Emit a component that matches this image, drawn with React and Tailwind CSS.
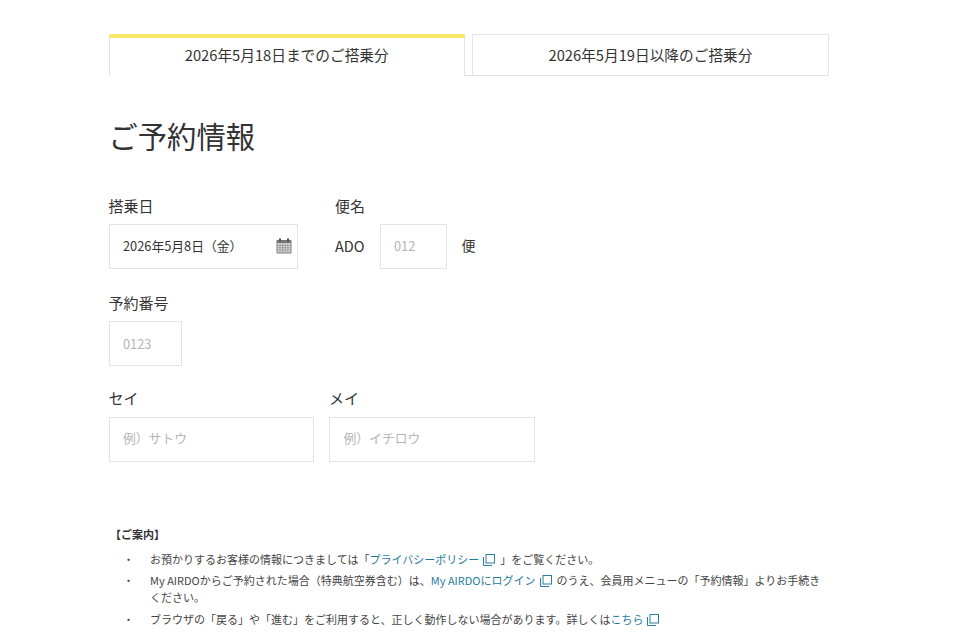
import React from 'react';

const labelClass = 'text-[15px] leading-[22px] text-[#333]';
const inputClass =
  'h-[44.5px] border border-[#e4e4e4] bg-white px-[13.5px] text-[12.8px] text-[#333] placeholder:text-[#b5b5b5] outline-none';

const CalendarIcon = () => (
  <svg width="16" height="16" viewBox="0 0 16 16" className="absolute right-[6.5px] top-[14px]">
    <rect x="0.5" y="2" width="15" height="13.5" rx="1" fill="#777" />
    <rect x="3" y="0.5" width="2" height="3" fill="#555" />
    <rect x="11" y="0.5" width="2" height="3" fill="#555" />
    <rect x="1.5" y="5" width="13" height="9.5" fill="#dedede" />
    <path d="M1.5 7.4h13M1.5 9.8h13M1.5 12.2h13M4 5v9.5M6.6 5v9.5M9.2 5v9.5M11.8 5v9.5" stroke="#8a8a8a" strokeWidth="0.7" />
  </svg>
);

const ExternalIcon = () => (
  <svg width="12" height="12" viewBox="0 0 12 12" fill="none" className="ml-[4px] mr-[5px] inline-block align-[-2px]">
    <rect x="3" y="0.5" width="8.5" height="8.5" stroke="#2b7f9e" strokeWidth="1" />
    <path d="M0.5 3v8.5H9" stroke="#2b7f9e" strokeWidth="1" />
  </svg>
);

const Link = ({ children }) => <span className="text-[#1f7a9c]">{children}</span>;

const Notice = ({ children, className = '' }) => (
  <li className={`flex ${className}`}>
    <span className="w-[41.5px] shrink-0 pl-[14.5px]">・</span>
    <p className="w-[680px]">{children}</p>
  </li>
);

export default function App() {
  return (
    <div
      className="h-[640px] overflow-hidden bg-white pl-[108.5px] pt-[34px] text-[#333]"
      style={{ fontFamily: '"Noto Sans CJK JP", "Noto Sans", sans-serif' }}
    >
      <div className="flex h-[42px] w-[720.5px] items-stretch border-b border-[#e4e4e4]">
        <div className="-mb-px flex w-[356.5px] items-center justify-center border-x border-[#e4e4e4] border-t-[4px] border-t-[#f8ea66] bg-white pb-[3px] text-[14.7px]">
          2026年5月18日までのご搭乗分
        </div>
        <div className="w-[7px]" />
        <div className="flex w-[357px] items-center justify-center border border-b-0 border-[#e4e4e4] text-[14.7px]">
          2026年5月19日以降のご搭乗分
        </div>
      </div>

      <h1 className="mt-[37px] text-[29.3px] font-normal leading-[44px] text-[#333]">ご予約情報</h1>

      <div className="mt-[38px] flex gap-[37px]">
        <div className="flex flex-col gap-[7px]">
          <label className={labelClass}>搭乗日</label>
          <div className="relative">
            <div className={`${inputClass} flex w-[189.5px] items-center pb-px`}>2026年5月8日（金）</div>
            <CalendarIcon />
          </div>
        </div>
        <div className="flex flex-col gap-[7px]">
          <label className={labelClass}>便名</label>
          <div className="flex items-center">
            <span className="w-[44.5px] pb-px text-[14.5px]">ADO</span>
            <input className={`${inputClass} w-[67.5px] pb-[2px]`} placeholder="012" />
            <span className="ml-[14.5px] pb-px text-[14px]">便</span>
          </div>
        </div>
      </div>

      <div className="mt-[23.5px] flex flex-col gap-[7px]">
        <label className={labelClass}>予約番号</label>
        <input className={`${inputClass} w-[73.5px]`} placeholder="0123" />
      </div>

      <div className="mt-[21.5px] flex gap-[15px]">
        <div className="flex flex-col gap-[8px]">
          <label className={labelClass}>セイ</label>
          <input className={`${inputClass} w-[205.5px] pb-[3px]`} placeholder="例）サトウ" />
        </div>
        <div className="flex flex-col gap-[8px]">
          <label className={labelClass}>メイ</label>
          <input className={`${inputClass} w-[205.5px] pb-[3px]`} placeholder="例）イチロウ" />
        </div>
      </div>

      <div className="mt-[64.5px] text-[11px] leading-[17px] text-[#444]">
        <p className="pl-[1.5px] font-bold text-[#333]">【ご案内】</p>
        <ul className="mt-[8px] flex flex-col gap-[4px]">
          <Notice>
            お預かりするお客様の情報につきましては「<Link>プライバシーポリシー</Link>
            <ExternalIcon />」をご覧ください。
          </Notice>
          <Notice>
            My AIRDOからご予約された場合（特典航空券含む）は、<Link>My AIRDOにログイン</Link>
            <ExternalIcon />のうえ、会員用メニューの「予約情報」よりお手続きください。
          </Notice>
          <Notice className="mt-px">
            ブラウザの「戻る」や「進む」をご利用すると、正しく動作しない場合があります。詳しくは<Link>こちら</Link>
            <ExternalIcon />
          </Notice>
        </ul>
      </div>
    </div>
  );
}
